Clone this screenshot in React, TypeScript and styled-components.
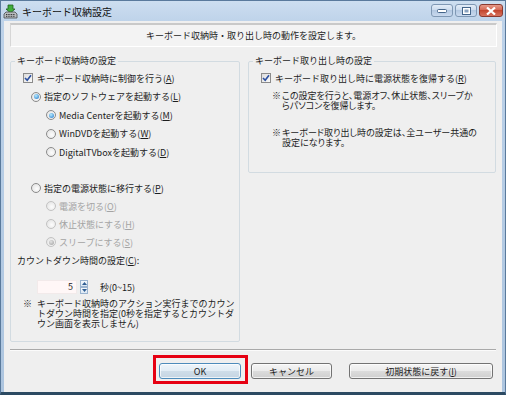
import styled, { createGlobalStyle } from "styled-components";

const GlobalStyle = createGlobalStyle`
  html, body {
    margin: 0;
    padding: 0;
  }
  body {
    font-family: "Noto Sans CJK JP", "Noto Sans", sans-serif;
    font-size: 9px;
    color: #1c1c1c;
  }
`;

const Window = styled.div`
  width: 506px;
  height: 395px;
  box-sizing: border-box;
  display: flex;
  flex-direction: column;
  background: linear-gradient(#cddef0, #bdd2e9 22px, #adc5df);
  border: 1px solid #5a7a9c;
  border-bottom: 3px solid #2c4a62;
`;

const TitleBar = styled.div`
  height: 20px;
  display: flex;
  align-items: center;
  padding: 0 2px;
`;

const Title = styled.span`
  margin-left: 4px;
  font-size: 10px;
  color: #111;
`;

const Caption = styled.div`
  margin-left: auto;
  display: flex;
  gap: 2px;
  align-self: flex-start;
  margin-top: 3px;
`;

type CapProps = { $close?: boolean };

const CapButton = styled.div<CapProps>`
  width: ${(p) => (p.$close ? 24 : 22)}px;
  height: 13px;
  border-radius: 3px;
  border: 1px solid ${(p) => (p.$close ? "#8a3a30" : "#7f98b4")};
  background: ${(p) =>
    p.$close
      ? "linear-gradient(#e69a8a, #d2634f 50%, #c3462f 50%, #d8735f)"
      : "linear-gradient(#e3edf8, #c9d9ec 50%, #b4c9e2 50%, #c9d9ee)"};
  display: flex;
  align-items: center;
  justify-content: center;
  box-sizing: border-box;
`;

const Client = styled.div`
  flex: 1;
  margin: 0 3px;
  padding: 2px 0 0 6px;
  background: #efefef;
  display: flex;
  flex-direction: column;
`;

const Banner = styled.div`
  height: 24px;
  margin-right: 5px;
  box-sizing: border-box;
  display: flex;
  align-items: center;
  justify-content: center;
  background: #f3f3f3;
  border-top: 2px solid #c9c9c9;
  border-left: 1px solid #d6d6d6;
  border-right: 1px solid #ffffff;
  border-bottom: 1px solid #ffffff;
`;

const Groups = styled.div`
  display: flex;
  align-items: flex-start;
  gap: 8px;
  margin-top: 8px;
`;

type GroupProps = { $w: number; $h: number };

const Group = styled.fieldset<GroupProps>`
  margin: 0;
  padding: 2px 0 0 12px;
  min-width: 0;
  width: ${(p) => p.$w}px;
  height: ${(p) => p.$h}px;
  box-sizing: border-box;
  border: 1px solid #d2dbe1;
  border-radius: 2px;
`;

const Legend = styled.legend`
  padding: 0 2px;
  margin-left: -8px;
  line-height: 12px;
`;

type RowProps = {
  $indent?: number;
  $h?: number;
  $mt?: number;
  $disabled?: boolean;
};

const Row = styled.div<RowProps>`
  display: flex;
  align-items: center;
  gap: 3px;
  height: ${(p) => p.$h ?? 18}px;
  margin-top: ${(p) => p.$mt ?? 0}px;
  margin-left: ${(p) => p.$indent ?? 0}px;
  color: ${(p) => (p.$disabled ? "#a4a4a4" : "#1c1c1c")};
  white-space: nowrap;
`;

const CheckBox = styled.span`
  width: 10px;
  height: 10px;
  box-sizing: border-box;
  border: 1px solid #8b8b8b;
  background: linear-gradient(135deg, #dcdcdc, #fafafa);
  display: flex;
  align-items: center;
  justify-content: center;
  margin-right: 1px;
`;

type RadioProps = { $on?: boolean; $disabled?: boolean };

const Radio = styled.span<RadioProps>`
  width: 10px;
  height: 10px;
  box-sizing: border-box;
  border-radius: 50%;
  border: 1px solid ${(p) => (p.$disabled ? "#c2c2c2" : "#8b8b8b")};
  background: radial-gradient(circle at 60% 60%, #fdfdfd, #dedede);
  display: flex;
  align-items: center;
  justify-content: center;

  &::after {
    content: "";
    display: ${(p) => (p.$on ? "block" : "none")};
    width: 5px;
    height: 5px;
    border-radius: 50%;
    background: ${(p) =>
      p.$disabled
        ? "radial-gradient(circle at 40% 35%, #e4e4e4, #9c9c9c)"
        : "radial-gradient(circle at 40% 35%, #b8ecff, #1f74c8)"};
  }
`;

type NoteProps = { $indent?: number; $mark: number; $mt: number; $tight?: boolean };

const Note = styled.div<NoteProps>`
  display: flex;
  margin-left: ${(p) => p.$indent ?? 0}px;
  margin-top: ${(p) => p.$mt}px;
  line-height: 10px;
  white-space: nowrap;
  font-feature-settings: ${(p) => (p.$tight ? '"palt"' : "normal")};

  & > span:first-child {
    width: ${(p) => p.$mark}px;
    flex: none;
  }
`;

const SpinRow = styled.div`
  display: flex;
  align-items: center;
  height: 14px;
  margin-top: 11px;
  margin-left: 14px;
`;

const NumBox = styled.div`
  width: 40px;
  height: 14px;
  box-sizing: border-box;
  background: #fff7f7;
  border: 1px solid #f2eaea;
  text-align: right;
  padding-right: 3px;
  line-height: 12px;
`;

const Spin = styled.div`
  margin-left: 3px;
  width: 8px;
  display: flex;
  flex-direction: column;
`;

const SpinBtn = styled.div`
  height: 7px;
  box-sizing: border-box;
  border: 1px solid #9ab3cf;
  background: linear-gradient(#f4f8fc, #dce8f4);
  display: flex;
  align-items: center;
  justify-content: center;
`;

const SpinUnit = styled.span`
  margin-left: 12px;
`;

const Separator = styled.div`
  height: 1px;
  margin: 7px 6px 0 0;
  background: #a9a9a9;
  border-bottom: 1px solid #fbfbfb;
`;

const ButtonRow = styled.div`
  display: flex;
  justify-content: flex-end;
  gap: 10px;
  margin-top: 12px;
  padding-right: 9px;
`;

type ButtonProps = { $w: number; $ml?: number; $default?: boolean; $mark?: boolean };

const Button = styled.div<ButtonProps>`
  position: relative;
  width: ${(p) => p.$w}px;
  height: 16px;
  margin-left: ${(p) => p.$ml ?? 0}px;
  box-sizing: border-box;
  display: flex;
  align-items: center;
  justify-content: center;
  border: 1px solid ${(p) => (p.$default ? "#4d8bbb" : "#737373")};
  border-radius: 3px;
  background: ${(p) =>
    p.$default
      ? "linear-gradient(#eef5fa, #e1ecf5 50%, #cfdde9 50%, #c5d5e3)"
      : "linear-gradient(#f5f5f5, #ebebeb 50%, #dcdcdc 50%, #cfcfcf)"};
  box-shadow: inset 0 0 0 1px rgba(255, 255, 255, 0.7);

  &::after {
    content: "";
    display: ${(p) => (p.$mark ? "block" : "none")};
    position: absolute;
    left: -7px;
    right: -8px;
    top: -9px;
    bottom: -6px;
    border: 3px solid #e60012;
  }
`;

const CheckMark = () => (
  <svg width="8" height="8" viewBox="0 0 8 8">
    <path d="M1 4 L3.2 6.3 L7 1.2" fill="none" stroke="#2b4fa0" strokeWidth="1.6" />
  </svg>
);

const Arrow = ({ up }: { up?: boolean }) => (
  <svg width="5" height="3" viewBox="0 0 5 3">
    <path d={up ? "M0 3 L2.5 0 L5 3 Z" : "M0 0 L2.5 3 L5 0 Z"} fill="#2f5d93" />
  </svg>
);

const AppIcon = () => (
  <svg width="15" height="15" viewBox="0 0 15 15">
    <path d="M5 1 L10 1 L10 5 L12 5 L7.5 9 L3 5 L5 5 Z" fill="#3fae3a" stroke="#1f5f1c" strokeWidth="0.8" />
    <path d="M1 10 L3 8 L12 8 L14 10 L14 14 L1 14 Z" fill="#b9bcbf" stroke="#45494d" strokeWidth="0.8" />
    <path d="M3 10.5 H12 M3 12.3 H12" stroke="#222" strokeWidth="0.9" strokeDasharray="1 0.7" />
  </svg>
);

const App = () => {
  return (
    <>
      <GlobalStyle />
      <Window>
        <TitleBar>
          <AppIcon />
          <Title>キーボード収納設定</Title>
          <Caption>
            <CapButton>
              <svg width="10" height="4" viewBox="0 0 10 4">
                <rect x="0.5" y="0.5" width="9" height="3" rx="1" fill="#fff" stroke="#44658a" />
              </svg>
            </CapButton>
            <CapButton>
              <svg width="9" height="8" viewBox="0 0 9 8">
                <rect x="0.5" y="0.5" width="8" height="7" fill="#fff" stroke="#44658a" />
                <rect x="2.5" y="2.5" width="4" height="3" fill="#8aa3c0" />
              </svg>
            </CapButton>
            <CapButton $close>
              <svg width="10" height="8" viewBox="0 0 10 8">
                <path d="M1 0.5 L9 7.5 M9 0.5 L1 7.5" stroke="#fff" strokeWidth="2.2" />
              </svg>
            </CapButton>
          </Caption>
        </TitleBar>
        <Client>
          <Banner>キーボード収納時・取り出し時の動作を設定します。</Banner>
          <Groups>
            <Group $w={230} $h={287}>
              <Legend>キーボード収納時の設定</Legend>
              <Row $h={18.5}>
                <CheckBox>
                  <CheckMark />
                </CheckBox>
                <span>キーボード収納時に制御を行う(<u>A</u>)</span>
              </Row>
              <Row $h={18.5} $indent={8}>
                <Radio $on />
                <span>指定のソフトウェアを起動する(<u>L</u>)</span>
              </Row>
              <Row $h={18.5} $indent={23}>
                <Radio $on />
                <span>Media Centerを起動する(<u>M</u>)</span>
              </Row>
              <Row $h={18.5} $indent={23}>
                <Radio />
                <span>WinDVDを起動する(<u>W</u>)</span>
              </Row>
              <Row $h={18.5} $indent={23}>
                <Radio />
                <span>DigitalTVboxを起動する(<u>D</u>)</span>
              </Row>
              <Row $mt={17.5} $indent={8}>
                <Radio />
                <span>指定の電源状態に移行する(<u>P</u>)</span>
              </Row>
              <Row $indent={23} $disabled>
                <Radio $disabled />
                <span>電源を切る(<u>O</u>)</span>
              </Row>
              <Row $indent={23} $disabled>
                <Radio $disabled />
                <span>休止状態にする(<u>H</u>)</span>
              </Row>
              <Row $indent={23} $disabled>
                <Radio $disabled $on />
                <span>スリープにする(<u>S</u>)</span>
              </Row>
              <Row $indent={-6}>
                <span>カウントダウン時間の設定(<u>C</u>):</span>
              </Row>
              <SpinRow>
                <NumBox>5</NumBox>
                <Spin>
                  <SpinBtn>
                    <Arrow up />
                  </SpinBtn>
                  <SpinBtn>
                    <Arrow />
                  </SpinBtn>
                </Spin>
                <SpinUnit>秒(0~15)</SpinUnit>
              </SpinRow>
              <Note $mark={14} $mt={5}>
                <span>※</span>
                <span>
                  キーボード収納時のアクション実行までのカウン
                  <br />
                  トダウン時間を指定(0秒を指定するとカウントダ
                  <br />
                  ウン画面を表示しません)
                </span>
              </Note>
            </Group>
            <Group $w={248} $h={118}>
              <Legend>キーボード取り出し時の設定</Legend>
              <Row $h={18.5}>
                <CheckBox>
                  <CheckMark />
                </CheckBox>
                <span>キーボード取り出し時に電源状態を復帰する(<u>R</u>)</span>
              </Row>
              <Note $indent={11} $mark={10} $mt={3} $tight>
                <span>※</span>
                <span>
                  この設定を行うと、電源オフ、休止状態、スリープか
                  <br />
                  らパソコンを復帰します。
                </span>
              </Note>
              <Note $indent={11} $mark={10} $mt={17} $tight>
                <span>※</span>
                <span>
                  キーボード取り出し時の設定は、全ユーザー共通の
                  <br />
                  設定になります。
                </span>
              </Note>
            </Group>
          </Groups>
          <Separator />
          <ButtonRow>
            <Button $w={82} $default $mark>
              OK
            </Button>
            <Button $w={81}>キャンセル</Button>
            <Button $w={144} $ml={7}>
              <span>初期状態に戻す(<u>I</u>)</span>
            </Button>
          </ButtonRow>
        </Client>
      </Window>
    </>
  );
};

export default App;
